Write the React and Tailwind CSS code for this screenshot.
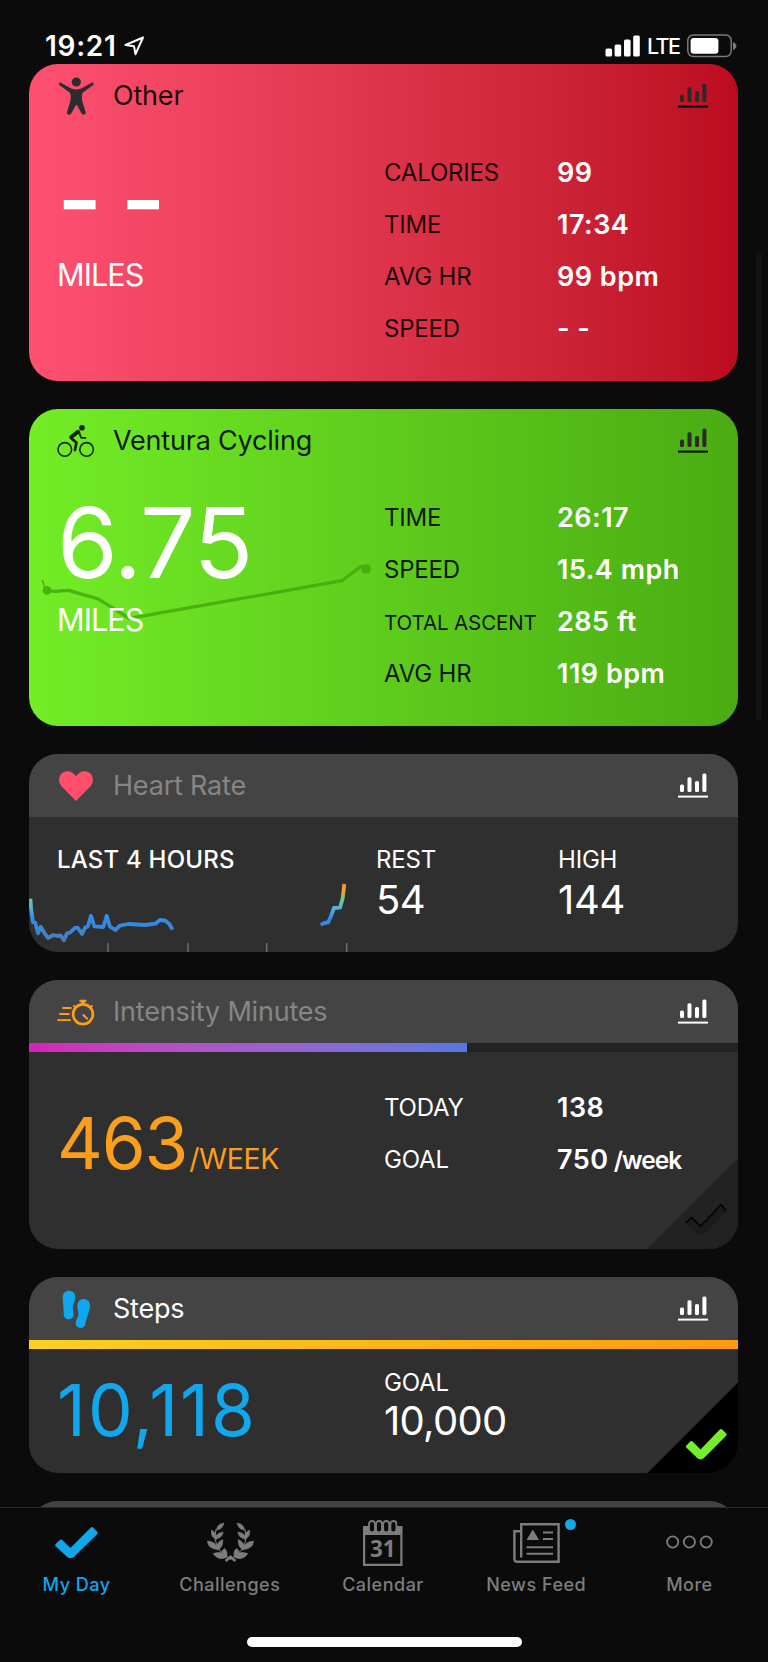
import React from 'react';

const LEAVES = [
  'M17 1 Q10.5 1.5 9.5 8 Q15.5 7.5 17 1 Z',
  'M4.6 8 Q3 14.5 9.5 17.5 Q11 11.5 4.6 8 Z',
  'M16.2 10.2 Q9.8 10 8.6 16.8 Q14.8 16.6 16.2 10.2 Z',
  'M0.4 19 Q1 27 11 27.5 Q9.5 19.5 0.4 19 Z',
  'M15.7 17.6 Q8.5 20.5 10.4 28 Q16.5 25.5 15.7 17.6 Z',
  'M6.2 31.6 Q11.5 39.5 20 35 Q16 28 6.2 31.6 Z',
  'M17.6 26.4 Q12.2 29.5 18 36 Q22.6 31.5 17.6 26.4 Z',
];

const ChartIcon = ({ dark }) => (
  <svg width="30" height="26" viewBox="0 0 30 26" className={dark ? 'text-[#2b2a26]' : 'text-white'} fill="currentColor">
    <rect x="2" y="11.5" width="4" height="7.5" rx="1.5" />
    <rect x="9.5" y="4.3" width="4" height="14.7" rx="1.5" />
    <rect x="17" y="8" width="4" height="11" rx="1.5" />
    <rect x="24.4" y="0.5" width="4" height="18.5" rx="1.5" />
    <rect x="0" y="22.6" width="30" height="2" className={dark ? 'text-black' : 'text-white'} />
  </svg>
);

const PersonIcon = () => (
  <svg width="38" height="40" viewBox="0 0 38 40" fill="#2d2c2c" stroke="#2d2c2c" strokeWidth="1.2" strokeLinejoin="round">
    <circle cx="19.3" cy="6" r="4" />
    <path d="M3 7 L13.5 12.8 Q19.3 15.6 25 12.8 L35.6 7 L36.2 8.3 L25 16.4 Q23.6 20 24.6 25 L28.2 37 Q27 38.8 25.4 37.6 L19.5 27 L13.4 37.6 Q11.6 38.8 10.4 37 L14 25 Q15 20 13.6 16.4 L2.4 8.3 Z" />
  </svg>
);

const BikeIcon = () => (
  <svg width="38" height="34" viewBox="0 0 38 34" fill="none" stroke="#16280c" strokeLinecap="round" strokeLinejoin="round">
    <circle cx="7.8" cy="25.4" r="6.8" strokeWidth="1.6" />
    <circle cx="29.6" cy="25.4" r="6.8" strokeWidth="1.6" />
    <circle cx="25" cy="3.7" r="2.8" fill="#16280c" stroke="none" />
    <path d="M14.2 13 L21 7.8" strokeWidth="4" />
    <path d="M22 7.6 L24 13.6 L28.4 14" strokeWidth="1.8" />
    <path d="M14 14 L19.4 18.6 L18 26" strokeWidth="2.8" />
  </svg>
);

const HeartIcon = () => (
  <svg width="34" height="30" viewBox="0 0 34 30" fill="#ff4f6d">
    <path d="M17 30 L2.8 15.6 C-1 11.6 -0.6 5.4 2.8 2.4 C6.6 -1 12.8 -0.8 17 5.2 C21.2 -0.8 27.4 -1 31.2 2.4 C34.6 5.4 35 11.6 31.2 15.6 Z" />
  </svg>
);

const StopwatchIcon = () => (
  <svg width="38" height="32" viewBox="0 0 38 32" fill="none" stroke="#fb9e1b">
    <circle cx="26" cy="18.2" r="9.9" strokeWidth="2.7" />
    <path d="M22.3 3.7 H29.4 V5.4 L27.4 6.8 V9 H24.4 V6.8 L22.3 5.4 Z" fill="#fb9e1b" stroke="none" />
    <path d="M16.4 9.4 L18.6 11.6 M35.4 9.4 L33.4 11.6" strokeWidth="2" />
    <path d="M25.8 18.6 L30.8 23.2" strokeWidth="2" />
    <path d="M5.3 12 H14.6 M2.3 18 H12.4 M0.3 24.1 H13.8" strokeWidth="1.8" />
  </svg>
);

const StepsIcon = () => (
  <svg width="38" height="42" viewBox="0 0 38 42" fill="#10a7ec">
    <path d="M5.7 9 C5.7 5 8.5 2.7 12 2.7 C15.8 2.7 18.3 5.5 18.3 9 C18.3 14 15.6 16 15.8 20 C16 22.5 16.7 24 16.7 26.5 C16.7 29.5 14.8 31.3 12 31.3 C9 31.3 6.8 29.5 6.8 26.5 C6.8 20 5.7 14 5.7 9 Z" />
    <path d="M20.3 17 C20.8 13 23.5 11 27 11 C31 11.4 33.3 14.5 33 18 C32.5 24 30 28 28.5 35.5 C28 38.5 26 40 23.3 40 C20.5 39.7 18.5 37.8 18.7 35 C19 31 21.5 29 21.5 25.5 C21.5 22.5 20 20.5 20.3 17 Z" />
  </svg>
);

const CHECK = 'M1.4 17.7 L5.4 13.5 Q6.6 12.6 7.8 13.6 L15.7 21.2 L35 1.8 Q36.2 0.8 37.4 1.8 L41.4 5.8 Q42.2 6.8 41.4 7.8 L19.2 29.6 Q15.8 32.4 12.4 29.6 L1.4 19.4 Q0.6 18.6 1.4 17.7 Z';

const DoneCorner = ({ done }) => (
  <svg width="91" height="91" viewBox="0 0 91 91" className="absolute right-0 bottom-0">
    <path d="M0.5 91 L91 0.5 V91 Z" fill={done ? '#000000' : '#222222'} />
    <g transform="translate(37.8 45.6) scale(1 1.03)">
      <path d={CHECK} fill={done ? '#74f02a' : '#1b1b1b'} />
      {!done && (
        <path d="M1 19 L6.6 13.4 L15.7 22 L36.2 1.2 L41.6 6.6" fill="none" stroke="#000" strokeWidth="1.4" />
      )}
    </g>
  </svg>
);

const Header = ({ icon, title, titleClass, headClass = '', dark }) => (
  <div className={`flex h-[63px] items-center pr-[30px] pl-7 ${headClass}`}>
    <div className="flex w-[56px] items-center">{icon}</div>
    <div className={`flex-1 text-[27px] leading-8 tracking-[-0.2px] ${titleClass}`}>{title}</div>
    <ChartIcon dark={dark} />
  </div>
);

const Stats = ({ rows, labelClass }) => (
  <div className="flex-1">
    {rows.map((row) => (
      <div key={row.label} className="flex h-[52px] items-center">
        <div className={`w-[173px] whitespace-nowrap ${row.small ? 'pt-0.5 text-[20.5px] tracking-[-0.1px]' : 'text-[24px] tracking-[-0.2px]'} ${labelClass}`}>
          {row.label}
        </div>
        <div className="text-[27px] font-semibold tracking-[0.5px] whitespace-nowrap text-white">
          {row.value}
          {row.unit && <span className="text-[24.5px] tracking-[-1px]"> {row.unit}</span>}
        </div>
      </div>
    ))}
  </div>
);

const ActivityCard = ({ icon, title, titleClass, value, valueClass, rows, cardClass, children }) => (
  <section className={`relative h-[317px] shrink-0 overflow-hidden rounded-[29px] bg-linear-to-r ${cardClass}`}>
    {children}
    <div className="relative">
      <Header icon={icon} title={title} titleClass={titleClass} dark />
      <div className="flex pt-5">
        <div className="w-[326px] pl-[28px] text-white">
          <div className={`h-[102px] text-[98px] whitespace-nowrap ${valueClass}`}>{value}</div>
          <div className="mt-[6px] text-[30.5px] leading-[40px] tracking-[-0.9px]">MILES</div>
        </div>
        <div className="w-[29px]" />
        <Stats rows={rows} labelClass="text-black/90" />
      </div>
    </div>
  </section>
);

const RouteLine = () => (
  <svg width="355" height="317" viewBox="0 0 355 317" className="absolute top-0 left-0" fill="none">
    <g opacity="0.85" stroke="#45a90e" strokeWidth="3.2" strokeLinejoin="round">
      <path d="M13.3 171 L16 179" strokeWidth="1.5" />
      <path d="M18 181.5 L26 182.3 L39.7 181.4 L69.3 190 L100.3 209.3 L313 171.7 L332 157.4 L337 158" />
      <circle cx="18" cy="181.3" r="4.4" fill="#45a90e" stroke="none" />
      <circle cx="337" cy="160" r="4.8" fill="#45a90e" stroke="none" />
    </g>
  </svg>
);

const HeartRateChart = () => (
  <svg width="320" height="72" viewBox="0 0 320 72" className="absolute bottom-0 left-0" fill="none">
    <defs>
      <linearGradient id="hr" gradientUnits="userSpaceOnUse" x1="0" y1="4" x2="0" y2="61">
        <stop offset="0" stopColor="#f5982f" />
        <stop offset="0.14" stopColor="#e9a63a" />
        <stop offset="0.27" stopColor="#5fcf86" />
        <stop offset="0.42" stopColor="#5aaede" />
        <stop offset="0.6" stopColor="#2f8cec" />
        <stop offset="0.8" stopColor="#3a86d6" />
        <stop offset="1" stopColor="#4a7eae" />
      </linearGradient>
    </defs>
    <path d="M79 63 V72 M159 63 V72 M237.7 63 V72 M317.7 63 V72" stroke="#6d6d6d" strokeWidth="1.5" />
    <g stroke="url(#hr)" strokeWidth="3.8" strokeLinejoin="round">
      <path d="M1.4 18.7 L2 28.3 L4 42.3 L6.3 42.7 L9 53.3 L11.7 46.7 L15 52.3 L19 58 L24.3 55 L28 56 L31.7 55.5 L35 60.3 L38 53.3 L41 52.7 L46.3 47.7 L49 48 L53 54 L56.3 47.3 L58.7 46.7 L62 36 L65.3 46.3 L74.3 47 L77.7 36 L81 46.7 L86.3 50 L91 45.7 L99.3 44 L116.7 45 L126.3 43.7 L131 40 L136.3 40.7 L140.3 44 L143.5 49.6" />
      <path d="M291.7 45 L295 43 L299.3 42.3 L302 36 L305 28 L311 27.7 L313.7 18.3 L315.3 4" />
    </g>
  </svg>
);

const HeartRateCard = () => (
  <section className="relative h-[198px] shrink-0 overflow-hidden rounded-[29px] bg-[#2f2f2f] text-white">
    <Header icon={<span className="pl-0.5"><HeartIcon /></span>} title="Heart Rate" titleClass="text-[#868686]" headClass="bg-[#444444]" />
    <HeartRateChart />
    <div className="relative flex pt-[30px] pl-[28px]">
      <div className="w-[319px] text-[24px] leading-[26px] font-medium tracking-[0.2px]">LAST 4 HOURS</div>
      <div className="w-[182px]">
        <div className="text-[24px] leading-[26px] tracking-[-0.2px]">REST</div>
        <div className="text-[40px] leading-[54px] tracking-[-0.5px]">54</div>
      </div>
      <div>
        <div className="text-[24px] leading-[26px] tracking-[-0.2px]">HIGH</div>
        <div className="text-[40px] leading-[54px] tracking-[-0.3px]">144</div>
      </div>
    </div>
  </section>
);

const IntensityCard = () => (
  <section className="relative h-[269px] shrink-0 overflow-hidden rounded-[29px] bg-[#2f2f2f] text-white">
    <Header icon={<StopwatchIcon />} title="Intensity Minutes" titleClass="text-[#868686]" headClass="bg-[#444444]" />
    <div className="h-[9px] bg-[#222222]">
      <div className="h-full w-[438px] bg-linear-to-r from-[#d620b8] to-[#5578e0]" />
    </div>
    <DoneCorner />
    <div className="relative flex pt-[30px]">
      <div className="flex w-[326px] items-baseline pt-[21px] pl-[28px] leading-[80px] text-[#fb9e1b]">
        <span className="text-[71px] tracking-[-1.2px]">463</span>
        <span className="ml-[2px] text-[28.5px] tracking-[-0.4px]">/WEEK</span>
      </div>
      <div className="w-[29px]" />
      <Stats
        labelClass="text-white"
        rows={[
          { label: 'TODAY', value: '138' },
          { label: 'GOAL', value: '750', unit: '/week' },
        ]}
      />
    </div>
  </section>
);

const StepsCard = () => (
  <section className="relative h-[196px] shrink-0 overflow-hidden rounded-[29px] bg-[#2f2f2f] text-white">
    <Header icon={<StepsIcon />} title="Steps" titleClass="text-white" headClass="bg-[#444444]" />
    <div className="h-[9px] bg-linear-to-r from-[#fcd11e] to-[#fe9a10]" />
    <DoneCorner done />
    <div className="relative flex">
      <div className="w-[355px] pt-[20px] pl-[28px] text-[71px] leading-[82px] tracking-[2px] text-[#10a7ec]">10,118</div>
      <div className="pt-[21px]">
        <div className="text-[24px] leading-[26px] tracking-[-0.2px]">GOAL</div>
        <div className="text-[40px] leading-[50px] tracking-[-0.7px]">10,000</div>
      </div>
    </div>
  </section>
);

const LaurelIcon = () => (
  <svg width="47" height="42" viewBox="0 0 47 42" fill="#7d7d7d" className="ml-0.5">
    {['', 'translate(47 0) scale(-1 1)'].map((t) => (
      <g key={t} transform={t}>
        {LEAVES.map((d) => <path key={d} d={d} stroke="#7d7d7d" strokeWidth="0.6" />)}
        <path d="M9.2 7 Q5.5 19 13 28.5 Q17 33 24 37.5" fill="none" stroke="#7d7d7d" strokeWidth="1.1" />
        <path d="M24.2 34.2 L18.6 39" stroke="#7d7d7d" strokeWidth="2.6" />
      </g>
    ))}
  </svg>
);

const CalendarIcon = () => (
  <svg width="40" height="46" viewBox="0 0 40 46">
    <path d="M0 6 H39.5 V46 H0 Z M2.2 15 V43.8 H37.3 V15 Z" fill="#7d7d7d" fillRule="evenodd" />
    {[9, 16, 23.2, 30.4].map((x) => (
      <rect key={x} x={x - 3} y="1" width="6" height="11.5" rx="3" fill="#0b0b0b" stroke="#7d7d7d" strokeWidth="1.8" />
    ))}
    <text x="19.8" y="37.2" textAnchor="middle" className="font-['Open_Sans'] text-[22.5px] font-bold" fill="#7d7d7d">31</text>
  </svg>
);

const NewsIcon = () => (
  <svg width="47" height="42" viewBox="0 0 47 42" fill="none" stroke="#7d7d7d" strokeWidth="2.4">
    <path d="M8.2 35.5 V2.2 H45.6 V39.8 H4.4 Q1.4 39.8 1.4 36.8 V9.2 H8.2" />
    <path d="M13.5 18 L19.8 7.4 L26 18 Z" fill="#7d7d7d" stroke="none" />
    <path d="M30 10.4 H40 M30 17 H40 M13.5 25.2 H40 M13.5 31.8 H40" strokeWidth="2" />
  </svg>
);

const MoreIcon = () => (
  <svg width="47" height="14" viewBox="0 0 47 14" className="mb-0.5" fill="none" stroke="#7d7d7d" strokeWidth="1.8">
    <circle cx="6.7" cy="7" r="5.6" />
    <circle cx="23.4" cy="7" r="5.6" />
    <circle cx="40.2" cy="7" r="5.6" />
  </svg>
);

const TABS = [
  { label: 'My Day', icon: <svg width="45" height="35" viewBox="0 0 43 32" fill="#10a7ec"><path d={CHECK} /></svg>, active: true },
  { label: 'Challenges', icon: <LaurelIcon /> },
  { label: 'Calendar', icon: <CalendarIcon /> },
  { label: 'News Feed', icon: <NewsIcon />, dot: true },
  { label: 'More', icon: <MoreIcon /> },
];

const TabBar = () => (
  <nav className="relative flex h-[155px] shrink-0 flex-col border-t border-[#2a2a2a] bg-[#0b0b0b]">
    <div className="grid w-[766px] grid-cols-5">
      {TABS.map((tab) => (
        <div key={tab.label} className={`flex flex-col items-center ${tab.active ? 'text-[#10a7ec]' : 'text-[#7d7d7d]'}`}>
          <div className="relative flex h-[69px] items-center justify-center">
            {tab.icon}
            {tab.dot && <span className="absolute top-[11px] -right-[16px] size-[11px] rounded-full bg-[#10a7ec]" />}
          </div>
          <div className="text-[18px] leading-4 font-medium tracking-[0.5px]">{tab.label}</div>
        </div>
      ))}
    </div>
    <div className="mx-auto mt-[44px] h-[10px] w-[275px] rounded-full bg-white" />
  </nav>
);

const StatusBar = () => (
  <div className="flex h-[64px] shrink-0 items-center pt-[28px] pr-[31px] pl-[45px] text-white">
    <div className="text-[28px] leading-8 font-semibold tracking-[0.7px]">19:21</div>
    <svg width="21" height="20" viewBox="0 0 21 20" className="ml-2" fill="none" stroke="white" strokeWidth="2" strokeLinejoin="round">
      <path d="M19 1.5 L1.5 9 L10 10.2 L11.5 18.2 Z" />
    </svg>
    <svg width="36" height="22" viewBox="0 0 36 22" className="ml-auto" fill="white">
      <rect x="0.5" y="13.5" width="6.6" height="8" rx="1.6" />
      <rect x="9.6" y="9.5" width="6.6" height="12" rx="1.6" />
      <rect x="19" y="4.6" width="6.6" height="16.9" rx="1.6" />
      <rect x="28.2" y="0.4" width="6.6" height="21.1" rx="1.6" />
    </svg>
    <div className="ml-[6px] w-[40px] text-[21.5px] leading-8 font-medium tracking-[-1.6px]">LTE</div>
    <svg width="50" height="24" viewBox="0 0 50 24" fill="none">
      <rect x="0.8" y="1" width="43.4" height="21.6" rx="5.5" stroke="#7b7b7b" strokeWidth="1.5" />
      <rect x="3.6" y="3.9" width="27.8" height="15.8" rx="3" fill="white" />
      <path d="M46 8 Q49.4 9.5 49.4 12 Q49.4 14.5 46 16 Z" fill="#7b7b7b" />
    </svg>
  </div>
);

export default function App() {
  return (
    <div className="relative flex h-[1662px] w-[768px] flex-col overflow-hidden bg-[#0b0b0b] font-['Inter','Liberation_Sans',sans-serif]">
      <StatusBar />
      <main className="flex h-[1443px] flex-col gap-7 overflow-hidden pr-[30px] pl-[29px]">
        <ActivityCard
          icon={<PersonIcon />}
          title="Other"
          titleClass="text-black/90"
          value="- -"
          valueClass="leading-[106px] font-medium tracking-[-4px]"
          cardClass="from-[#ff5072] to-[#bc0b20]"
          rows={[
            { label: 'CALORIES', value: '99' },
            { label: 'TIME', value: '17:34' },
            { label: 'AVG HR', value: '99 bpm' },
            { label: 'SPEED', value: '- -' },
          ]}
        />
        <ActivityCard
          icon={<BikeIcon />}
          title="Ventura Cycling"
          titleClass="text-black/90"
          value="6.75"
          valueClass="leading-[102px] tracking-[-0.7px]"
          cardClass="from-[#73ed27] to-[#4aac12]"
          rows={[
            { label: 'TIME', value: '26:17' },
            { label: 'SPEED', value: '15.4 mph' },
            { label: 'TOTAL ASCENT', value: '285 ft', small: true },
            { label: 'AVG HR', value: '119 bpm' },
          ]}
        >
          <RouteLine />
        </ActivityCard>
        <HeartRateCard />
        <IntensityCard />
        <StepsCard />
        <section className="h-[198px] shrink-0 rounded-[29px] bg-[#444444]" />
      </main>
      <TabBar />
      {/* scroll indicator */}
      <div className="absolute top-[253px] right-[6px] h-[467px] w-[6px] rounded-full bg-[#131313]" />
    </div>
  );
}
